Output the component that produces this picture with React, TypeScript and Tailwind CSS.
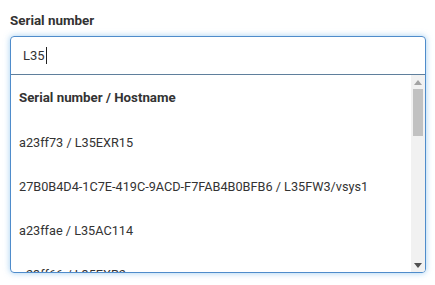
import React from 'react';

const items = [
  'a23ff73 / L35EXR15',
  '27B0B4D4-1C7E-419C-9ACD-F7FAB4B0BFB6 / L35FW3/vsys1',
  'a23ffae / L35AC114',
  'a23ff66 / L35EXR2',
];

export default function App() {
  return (
    <div
      className="w-[435px] h-[285px] bg-white pt-[14px] px-[10px] text-[#333]"
      style={{ fontFamily: 'Roboto, "Noto Sans", sans-serif' }}
    >
      <label className="block text-[13.4px] font-bold leading-[14px] h-[22px]">Serial number</label>

      <div className="w-[416px] rounded-[4px] border border-[#4f8ccb] shadow-[0_0_6px_rgba(102,175,233,0.6)] overflow-hidden">
        {/* search input */}
        <div className="h-[38px] border-b border-[#5f7f9c] flex items-center pl-[12px] text-[13px]">
          <span>L35</span>
          <span className="inline-block w-px h-[17px] bg-[#222] ml-px" />
        </div>

        {/* results */}
        <div className="flex h-[197px]">
          <div className="flex-1 overflow-hidden text-[12.7px]">
            <div className="h-[44px] flex items-center pl-[8px] pt-[2px] font-bold text-[13.3px]">
              Serial number / Hostname
            </div>
            {items.map((s) => (
              <div key={s} className="h-[44px] flex items-center pl-[8px] pt-[4px] whitespace-nowrap">
                {s}
              </div>
            ))}
          </div>

          {/* scrollbar */}
          <div className="w-[14px] bg-[#f1f1f1] flex flex-col">
            <div className="h-[14px] flex items-center justify-center">
              <svg width="8" height="5" viewBox="0 0 8 5">
                <path d="M0 5 L4 0 L8 5 Z" fill="#a3a3a3" />
              </svg>
            </div>
            <div className="mx-[2px] h-[47px] bg-[#c1c1c1]" />
            <div className="flex-1" />
            <div className="h-[14px] flex items-center justify-center">
              <svg width="8" height="5" viewBox="0 0 8 5">
                <path d="M0 0 L8 0 L4 5 Z" fill="#505050" />
              </svg>
            </div>
          </div>
        </div>
      </div>
    </div>
  );
}
